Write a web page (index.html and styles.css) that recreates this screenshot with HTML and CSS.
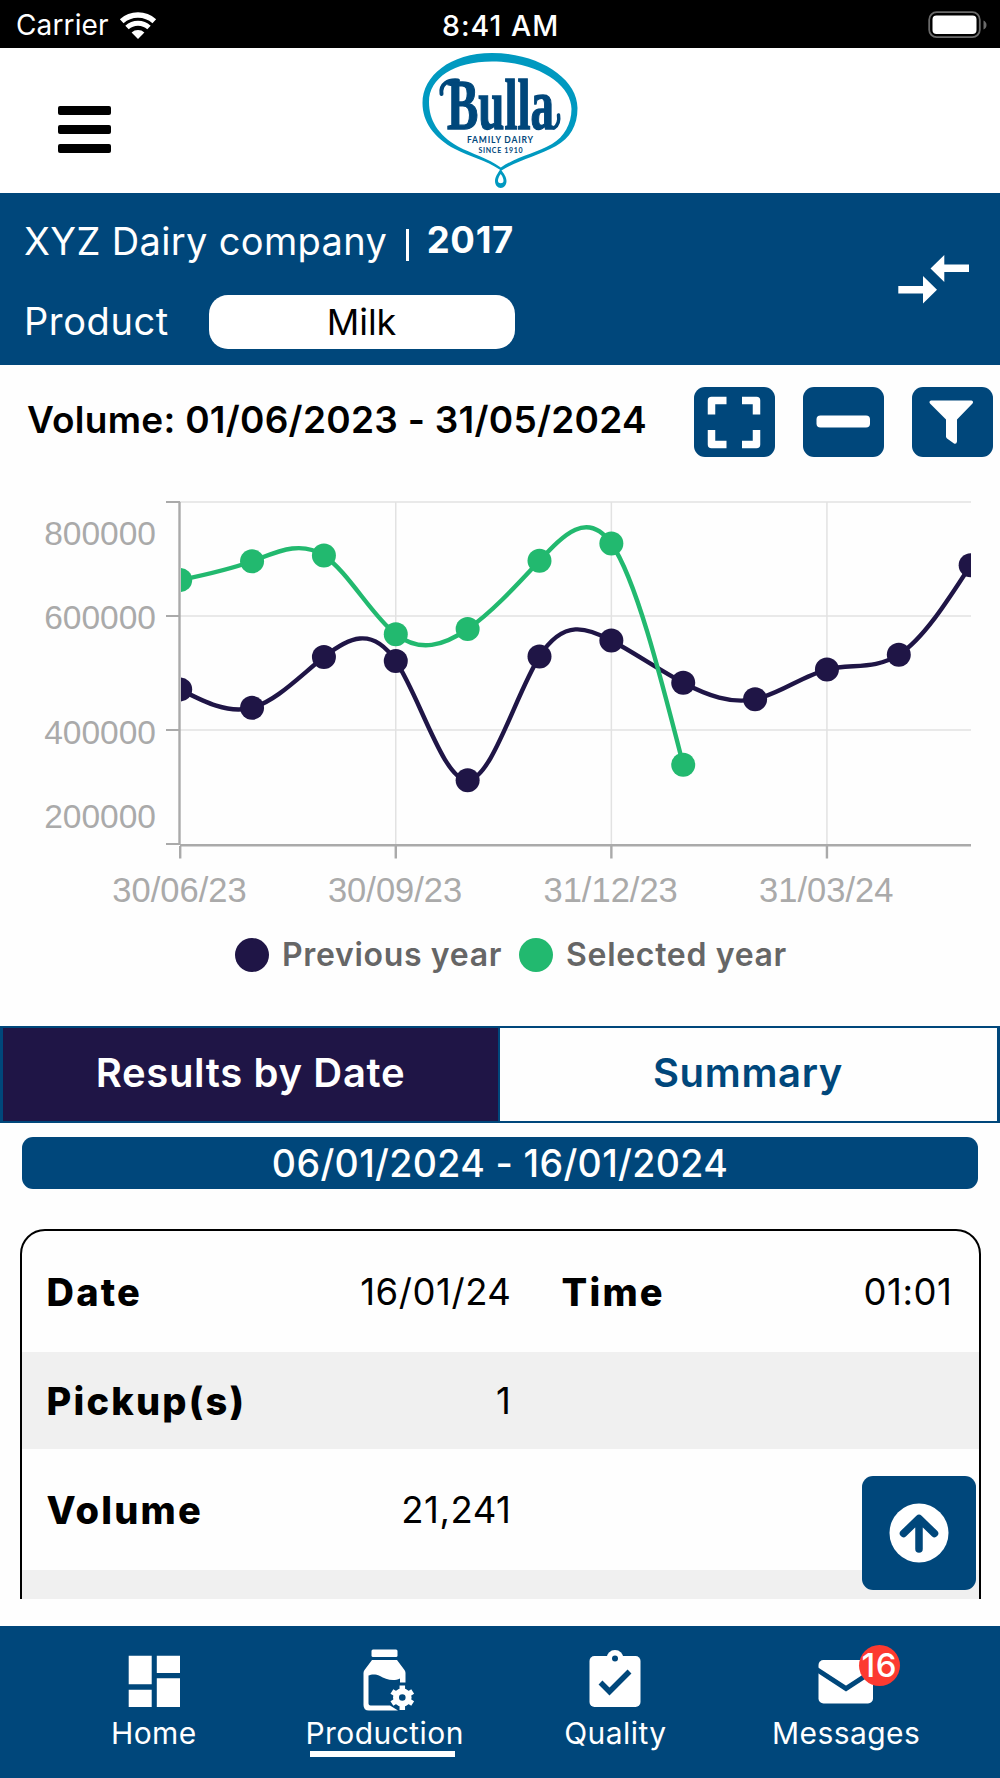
FILE: index.html
```html
<!DOCTYPE html>
<html lang="en">
<head>
    <meta charset="UTF-8">
    <meta name="viewport" content="width=device-width, initial-scale=1.0">
    <title>Production</title>
    <link rel="stylesheet" href="styles.css">
</head>
<body>
<div class="screen">
    <div class="status-bar">
        <div class="network">
            <span class="carrier">Carrier</span>
            <svg class="wifi" width="38" height="30" viewBox="0 0 38 30">
                <path d="M2.7 11.2 A24.5 24.5 0 0 1 35.3 11.2" fill="none" stroke="#fff" stroke-width="5.5"/>
                <path d="M8 17.5 A16.2 16.2 0 0 1 30 17.5" fill="none" stroke="#fff" stroke-width="5"/>
                <path d="M12.6 22.6 A9.5 9.5 0 0 1 25.4 22.6 L19 29 Z" fill="#fff"/>
            </svg>
        </div>
        <span class="time">8:41 AM</span>
        <svg class="battery" width="60" height="28" viewBox="0 0 60 28">
            <rect x="1.2" y="1.2" width="50.6" height="25" rx="7.5" fill="none" stroke="#6b6b6b" stroke-width="1.8"/>
            <rect x="4.5" y="4.5" width="44" height="18.5" rx="4" fill="#fff"/>
            <path d="M55.5 9.5 Q58.5 11 58.5 14 Q58.5 17 55.5 18.5 Z" fill="#6b6b6b"/>
        </svg>
    </div>

    <header class="header">
        <button class="menu"><i></i><i></i><i></i></button>
        <svg class="logo" width="160" height="140" viewBox="0 0 160 140">
            <path fill="#0099c0" fill-rule="evenodd" d="M80 121.8 C66 112 50 109 35 101 C14 90 2.5 74 2.5 55 C2.5 28 30 5 72 5 C118 5 157.5 30 157.5 60 C157.5 78 150 90 136 98 C118 108 98 112 81.5 122.5 C83.5 125 86.5 129 86.5 133 C86.5 137 84 140 80.8 140 C77.5 140 75 137 75 133 C75 129 78 125 80 121.8 Z M80.8 119.5 C96 109 116 105 132 96 C144 89 151.5 76 151.5 61 C151.5 37 118 13.5 72 13.5 C34 13.5 9 30 9 54 C9 72 18 87 38 98.5 C52 106 68 110 80.8 119.5 Z M80.7 126 C78.5 129 78 131 78 133 C78 136 83.5 136 83.5 133 C83.5 131 83 129 80.7 126 Z"/>
            <text class="logo-name" x="27" y="80.5" textLength="107" lengthAdjust="spacingAndGlyphs">Bulla</text>
            <path d="M21.5 46 C20 36 28 31.5 38 32.5" fill="none" stroke="#00477b" stroke-width="4" stroke-linecap="round"/>
            <path d="M134 80 Q140 76 138.5 67" fill="none" stroke="#00477b" stroke-width="3.5" stroke-linecap="round"/>
            <text class="logo-line" x="47" y="95" textLength="66" font-size="8.5">FAMILY DAIRY</text>
            <text class="logo-line" x="58.5" y="104.5" textLength="44" font-size="7">SINCE 1910</text>
        </svg>
    </header>

    <section class="farm">
        <div class="farm-info">
            <div class="farm-name">
                <span class="company">XYZ Dairy company</span>
                <i class="divider"></i>
                <b class="year">2017</b>
            </div>
            <div class="product">
                <span class="product-label">Product</span>
                <div class="select">Milk</div>
            </div>
        </div>
        <svg class="swap" width="72" height="50" viewBox="0 0 72 50">
            <path d="M0.3 31 H25 V21 L39 34.7 L25 48.5 V38.5 H0.3 Z" fill="#fff"/>
            <path d="M71 9.5 H46.3 V0 L32.5 13.5 L46.3 27 V17 H71 Z" fill="#fff"/>
        </svg>
    </section>

    <section class="toolbar">
        <h2>Volume: 01/06/2023 - 31/05/2024</h2>
        <div class="tools">
            <button>
                <svg width="81" height="70" viewBox="0 0 81 70">
                    <path d="M17.5 27.5 V13.5 H32.5 M48 13.5 H62.5 V27.5 M62.5 43 V57.5 H48 M32.5 57.5 H17.5 V43" fill="none" stroke="#fff" stroke-width="7.5" stroke-linejoin="round"/>
                </svg>
            </button>
            <button>
                <svg width="81" height="70" viewBox="0 0 81 70">
                    <rect x="13.5" y="28.5" width="53.5" height="12" rx="4" fill="#fff"/>
                </svg>
            </button>
            <button>
                <svg width="81" height="70" viewBox="0 0 81 70">
                    <path d="M19 13.5 H59.5 Q62 14.5 60.5 16.5 L45 32.5 V54.5 Q44.5 57.5 42 56.5 L35 51.5 Q34 50.5 34 49.5 V32.5 L18 16.5 Q16.5 14.5 19 13.5 Z" fill="#fff"/>
                </svg>
            </button>
        </div>
    </section>

    <section class="chart">
        <svg id="volumeChart" width="1000" height="430" viewBox="0 480 1000 430"></svg>
        <div class="legend">
            <span class="legend-item"><i class="dot previous"></i>Previous year</span>
            <span class="legend-item"><i class="dot selected"></i>Selected year</span>
        </div>
    </section>

    <div class="tabs">
        <div class="tab active">Results by Date</div>
        <div class="tab">Summary</div>
    </div>

    <div class="range">06/01/2024 - 16/01/2024</div>

    <div class="results">
        <div class="card">
            <div class="row tall">
                <div class="cell"><b>Date</b><span>16/01/24</span></div>
                <div class="cell"><b>Time</b><span>01:01</span></div>
            </div>
            <div class="row shaded">
                <div class="cell"><b>Pickup(s)</b><span>1</span></div>
            </div>
            <div class="row tall">
                <div class="cell"><b>Volume</b><span>21,241</span></div>
            </div>
            <div class="row shaded"></div>
        </div>
        <button class="to-top">
            <svg width="60" height="60" viewBox="0 0 60 60">
                <circle cx="30" cy="30" r="29.5" fill="#fff"/>
                <path d="M14.5 30.5 L30 15.5 L45.5 30.5 M30 17 V46" fill="none" stroke="#00477b" stroke-width="7.5" stroke-linecap="round" stroke-linejoin="round"/>
            </svg>
        </button>
    </div>

    <nav class="nav">
        <a class="nav-item">
            <svg width="72" height="64" viewBox="0 0 72 64">
                <path d="M10.7 8.7 h23 v28.5 h-23 z M10.7 42.7 h23 v17.2 h-23 z M38.8 8.7 h23.2 v17.2 h-23.2 z M38.8 31.3 h23.2 v28.6 h-23.2 z" fill="#fff"/>
            </svg>
            <span>Home</span>
        </a>
        <a class="nav-item current">
            <svg width="72" height="64" viewBox="0 0 72 64">
                <rect x="22.5" y="2.5" width="26" height="7.5" rx="1.5" fill="#fff"/>
                <path fill-rule="evenodd" fill="#fff" d="M23 13 H48 L55.5 23 Q56.5 24.5 56.5 26 V35.5 H51 V31.5 C44 35 36 32 31 29 C26 26.5 22 27.5 19.5 28.5 V56.5 Q19.5 58.5 21.5 58.5 H41 L49 63.5 H20 Q14.5 63.5 14.5 58 V26 Q14.5 24.5 15.5 23 Z"/>
                <circle cx="53.3" cy="50.5" r="6.3" fill="none" stroke="#fff" stroke-width="6"/>
                <path d="M53.3 38.5 V43 M53.3 58 V63 M42.9 44.5 L47 47 M59.6 54 L63.7 56.5 M42.9 56.5 L47 54 M59.6 47 L63.7 44.5" stroke="#fff" stroke-width="5.5"/>
            </svg>
            <span>Production</span>
        </a>
        <a class="nav-item">
            <svg width="72" height="64" viewBox="0 0 72 64">
                <rect x="10.5" y="9" width="51" height="51" rx="5" fill="#fff"/>
                <circle cx="36" cy="11.5" r="8.5" fill="#fff"/>
                <circle cx="36" cy="11.5" r="3" fill="#00477b"/>
                <path d="M21.5 35.5 L30.5 44.5 L50.5 24.5" fill="none" stroke="#00477b" stroke-width="5.5"/>
            </svg>
            <span>Quality</span>
        </a>
        <a class="nav-item">
            <svg width="72" height="64" viewBox="0 0 72 64">
                <rect x="8.5" y="13" width="54.5" height="43.5" rx="5" fill="#fff"/>
                <path d="M6 22 L36 41.5 L66 22" fill="none" stroke="#00477b" stroke-width="5"/>
            </svg>
            <i class="badge">16</i>
            <span>Messages</span>
        </a>
    </nav>
</div>
<script src="chart.js"></script>
</body>
</html>
```

FILE: styles.css
```css
* {
    box-sizing: border-box;
}
body {
    margin: 0;
    font-family: Inter, "Liberation Sans", sans-serif;
    background: #fefefe;
    color: #000;
}
button {
    border: none;
    padding: 0;
    background: none;
}
svg {
    display: block;
}
.screen {
    width: 1000px;
    height: 1778px;
    display: flex;
    flex-direction: column;
    overflow: hidden;
}

/* status bar */
.status-bar {
    height: 48px;
    padding: 2px 12px 0 16px;
    display: grid;
    grid-template-columns: 438px auto 1fr;
    align-items: center;
    background: #000;
    color: #fff;
    font-size: 28px;
}
.network {
    display: flex;
    align-items: center;
    gap: 10px;
    letter-spacing: 0.13px;
}
.time {
    padding-left: 2px;
    margin-left: -14px;
    font-size: 28.5px;
    font-weight: 500;
    letter-spacing: 1px;
}
.battery {
    justify-self: end;
}

.header {
    height: 145px;
    display: flex;
    background: #fff;
}
.menu {
    width: 53px;
    margin: 58px 0 0 58px;
    display: flex;
    flex-direction: column;
    gap: 10px;
}
.menu i {
    width: 53px;
    height: 9px;
    border-radius: 2px;
    background: #000;
}
.logo {
    margin-left: 309px;
    overflow: visible;
}
.logo-name {
    font: bold 72px "Liberation Serif", serif;
    fill: #00477b;
    stroke: #00477b;
    stroke-width: 1.4;
}
.logo-line {
    font-family: Lato, sans-serif;
    font-weight: bold;
    fill: #00477b;
}

/* farm and product */
.farm {
    height: 171.5px;
    padding: 14px 30px 0 24px;
    display: flex;
    justify-content: space-between;
    background: #00477b;
    color: #fff;
}
.farm-name {
    height: 68px;
    display: flex;
    align-items: center;
    font-size: 38px;
}
.company {
    letter-spacing: 0.35px;
}
.divider {
    width: 2.5px;
    height: 32px;
    margin: 8px 18px 0 19px;
    background: #fff;
}
.year {
    margin-top: -3px;
    font-size: 36.5px;
    letter-spacing: 0.7px;
}
.product {
    margin-top: 20px;
    height: 54px;
    display: flex;
    align-items: center;
    font-size: 38px;
}
.product-label {
    width: 184.5px;
    margin-top: -2px;
    letter-spacing: 0.6px;
}
.select {
    width: 306px;
    height: 54px;
    line-height: 54px;
    border-radius: 19px;
    background: #fff;
    color: #000;
    font-size: 36px;
    text-align: center;
}
.swap {
    margin-top: 48px;
}

.toolbar {
    height: 92px;
    padding: 22px 7px 0 27px;
    display: flex;
    justify-content: space-between;
}
.toolbar h2 {
    margin: 0;
    line-height: 66px;
    font-size: 37px;
    font-weight: 600;
    letter-spacing: 0.27px;
    white-space: nowrap;
}
.tools {
    display: flex;
    gap: 28px;
}
.tools button {
    width: 81px;
    height: 70px;
    border-radius: 11px;
    background: #00477b;
}

/* chart */
.chart {
    margin-top: 23.5px;
    height: 546px;
}
.chart text {
    font: 33.5px "Liberation Sans", Arial, sans-serif;
    fill: #aaa;
}
.chart .x-label {
    font-size: 34.5px;
}
.legend {
    margin-top: 25px;
    padding-left: 235px;
    display: flex;
    gap: 17px;
    color: #666;
    font-size: 32px;
    font-weight: 600;
    letter-spacing: 0.67px;
}
.legend-item {
    display: flex;
    align-items: center;
    gap: 13px;
}
.dot {
    width: 34px;
    height: 34px;
    border-radius: 50%;
}
.previous {
    background: #1f1546;
}
.selected {
    background: #22b96f;
}

/* tabs */
.tabs {
    height: 97px;
    display: flex;
    border: solid #00477b;
    border-width: 2px 3px;
    font-size: 40px;
    font-weight: 600;
    letter-spacing: 0.65px;
}
.tab {
    flex: 1;
    padding: 0 1px 4px 0;
    display: flex;
    align-items: center;
    justify-content: center;
    color: #00477b;
}
.tab.active {
    flex: none;
    width: 497px;
    padding-right: 0;
    border-right: 2px solid #00477b;
    background: #1f1546;
    color: #fff;
}
.range {
    height: 52px;
    margin: 14px 22px 0;
    border-radius: 11px;
    background: #00477b;
    color: #fff;
    line-height: 53px;
    font-size: 37.5px;
    font-weight: 500;
    letter-spacing: 0.35px;
    text-align: center;
}

/* results */
.results {
    position: relative;
    height: 370px;
    margin: 40px 19.5px 0;
    overflow: hidden;
}
.card {
    border: 2.5px solid #000;
    border-radius: 25px;
    height: 500px;
    font-size: 36.5px;
}
.row {
    height: 97px;
    padding: 0 26px 0 25px;
    display: grid;
    grid-template-columns: 465px 1fr;
    column-gap: 50px;
    align-items: center;
}
.row.tall {
    height: 121px;
}
.row.shaded {
    background: #f0f0f0;
}
.cell {
    display: flex;
    justify-content: space-between;
    align-items: center;
    letter-spacing: 0.55px;
}
.cell b {
    font-size: 38px;
    font-weight: 800;
    letter-spacing: 2.2px;
}
.to-top {
    position: absolute;
    top: 247px;
    right: 5px;
    width: 114px;
    height: 114px;
    display: grid;
    place-items: center;
    border-radius: 11px;
    background: #00477b;
}

/* bottom navigation */
.nav {
    flex: 1;
    margin-top: 27px;
    padding: 21px 38.5px 0 38.5px;
    display: grid;
    grid-template-columns: repeat(4, 1fr);
    background: #00477b;
}
.nav-item {
    position: relative;
    display: flex;
    flex-direction: column;
    align-items: center;
    color: #fff;
    font-size: 30px;
    letter-spacing: 0.45px;
}
.nav-item span {
    line-height: 44px;
}
.nav-item.current::after {
    content: "";
    width: 145px;
    height: 6px;
    margin: -4px 4px 0 0;
    background: #fff;
}
.badge {
    position: absolute;
    top: -2px;
    left: 128px;
    width: 41px;
    height: 41px;
    border-radius: 50%;
    background: #fc3a30;
    font-style: normal;
    font-size: 33px;
    font-weight: 500;
    line-height: 41px;
    text-align: center;
}
```

FILE: chart.js
```js
const NS = 'http://www.w3.org/2000/svg';
const chart = document.getElementById('volumeChart');
const left = 180, right = 971, top0 = 502, bottom = 845;
const step = 71.86;

function add(name, attrs, text) {
    const el = document.createElementNS(NS, name);
    for (const key in attrs) el.setAttribute(key, attrs[key]);
    if (text) el.textContent = text;
    chart.appendChild(el);
    return el;
}

function line(x1, y1, x2, y2, color, width) {
    add('line', { x1, y1, x2, y2, stroke: color, 'stroke-width': width });
}

// volumes in thousands, one per month
const previous = [471, 439, 528, 521, 312, 529, 557, 483, 454, 506, 532, 689];
const selected = [663, 696, 706, 568, 577, 697, 727, 339];

const px = i => left + 0.2 + i * step;
const py = v => 844 - (v - 200) * 0.57;

// natural cubic spline, slopes solved by relaxation
function spline(y) {
    const n = y.length, m = new Array(n).fill(0);
    for (let k = 0; k < 60; k++) {
        m[0] = (3 * (y[1] - y[0]) - m[1]) / 2;
        for (let i = 1; i < n - 1; i++) {
            m[i] = (3 * (y[i + 1] - y[i - 1]) - m[i - 1] - m[i + 1]) / 4;
        }
        m[n - 1] = (3 * (y[n - 1] - y[n - 2]) - m[n - 2]) / 2;
    }
    let d = `M${px(0)} ${y[0]}`;
    for (let i = 1; i < n; i++) {
        d += ` C${px(i - 1) + step / 3} ${y[i - 1] + m[i - 1] / 3} ${px(i) - step / 3} ${y[i] - m[i] / 3} ${px(i)} ${y[i]}`;
    }
    return d;
}

function series(values, color) {
    const y = values.map(py);
    add('path', { d: spline(y), fill: 'none', stroke: color, 'stroke-width': 4.4, 'clip-path': 'url(#plot)' });
    y.forEach((v, i) => add('circle', { cx: px(i), cy: v, r: 12, fill: color, 'clip-path': 'url(#plot)' }));
}

const clip = add('clipPath', { id: 'plot' });
clip.innerHTML = `<rect x="${left + 1}" y="${top0}" width="${right - left - 1}" height="343"/>`;

// grid
[502, 616, 730].forEach(y => line(left, y, right, y, '#e2e2e2', 1.5));
[3, 6, 9].forEach(i => line(px(i), top0, px(i), bottom, '#e2e2e2', 1.5));

// axes and ticks
[502, 616, 730, 844].forEach(y => line(166, y, 180, y, '#aaa', 2));
line(179.5, 502, 179.5, 844, '#aaa', 2.4);
line(180, 845.3, right, 845.3, '#aaa', 2.6);
[0, 3, 6, 9].forEach(i => line(px(i), 846, px(i), 858.5, '#aaa', 2.4));

// labels
[['800000', 544.5], ['600000', 629], ['400000', 743.5], ['200000', 828]].forEach(([t, y]) =>
    add('text', { x: 156, y, 'text-anchor': 'end' }, t));
['30/06/23', '30/09/23', '31/12/23', '31/03/24'].forEach((t, k) =>
    add('text', { class: 'x-label', x: px(k * 3) - 0.7, y: 901.5, 'text-anchor': 'middle' }, t));

series(previous, '#1f1546');
series(selected, '#22b96f');
```
